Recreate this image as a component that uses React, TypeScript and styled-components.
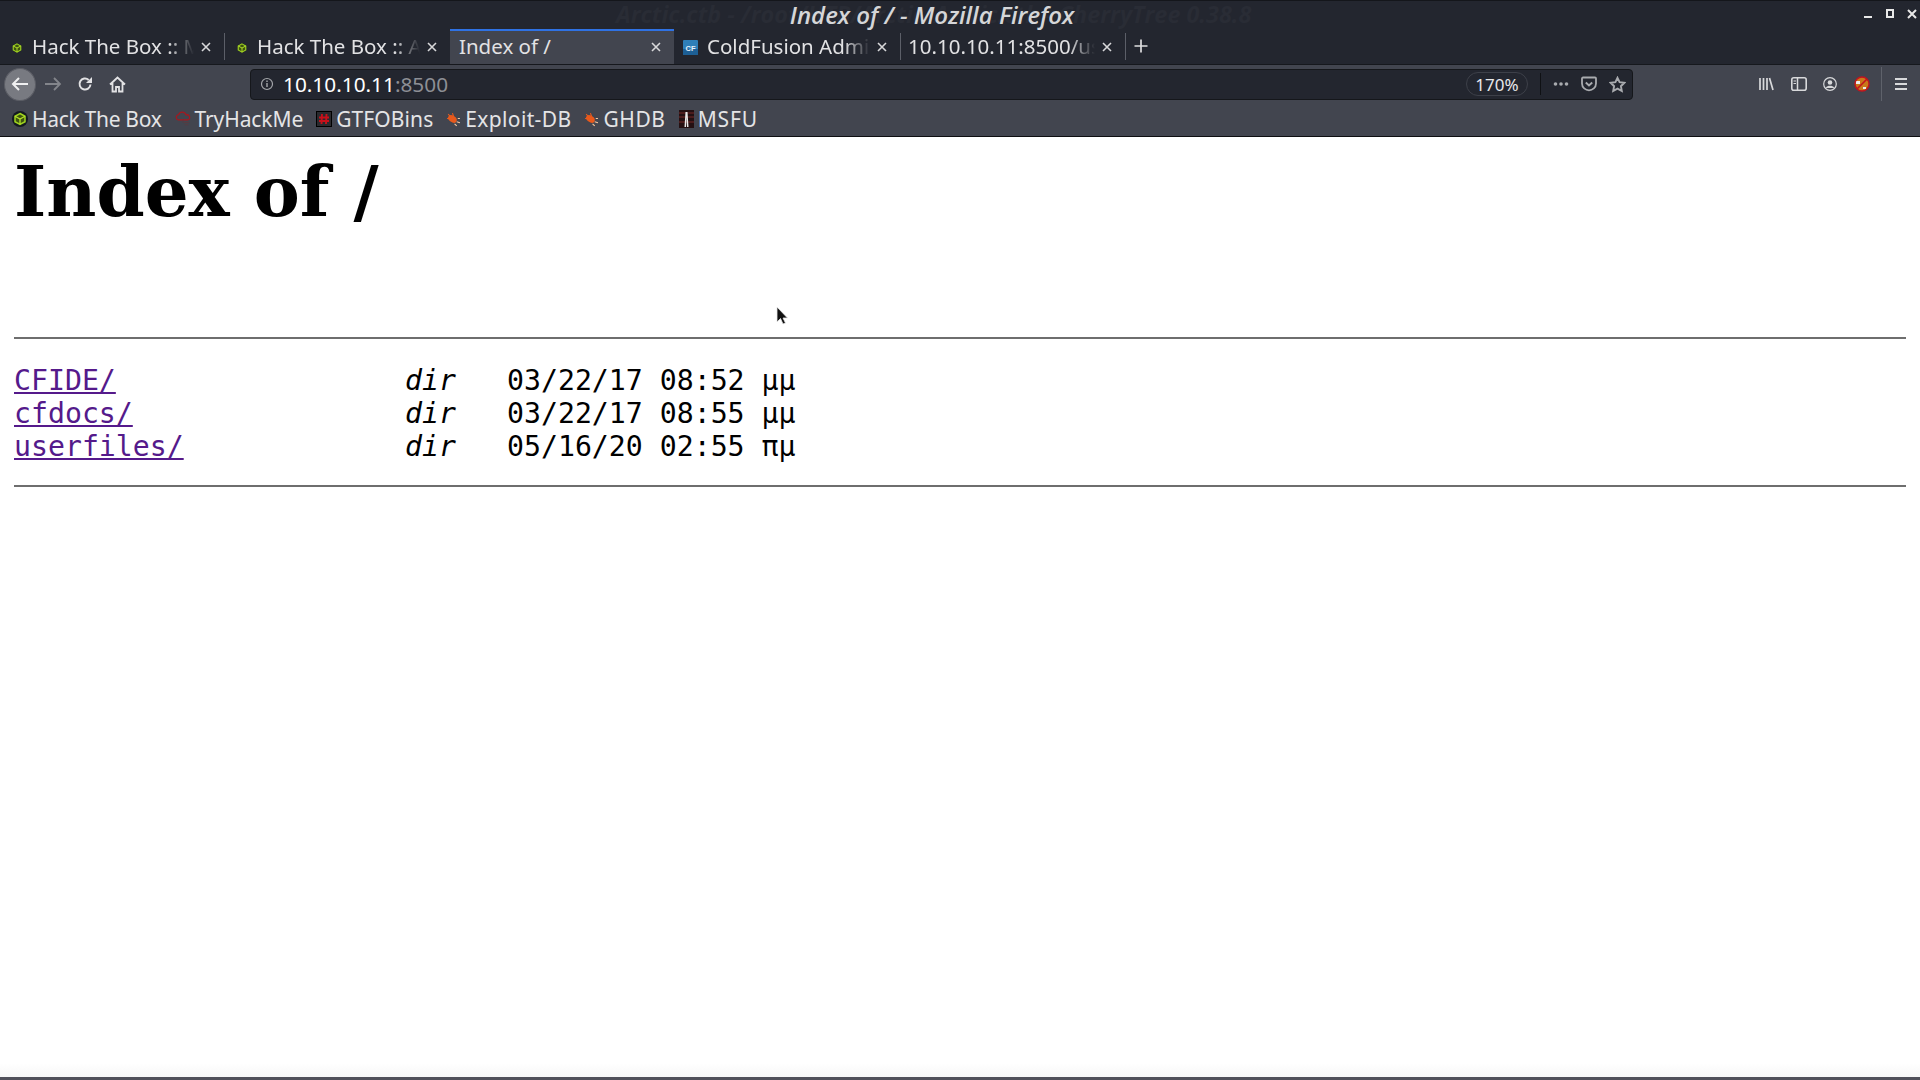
import React from "react";
import styled, { createGlobalStyle } from "styled-components";

const Global = createGlobalStyle`
  html, body { margin: 0; padding: 0; height: 100%; background: #fff; overflow: hidden; }
  #root { height: 100%; }
`;

const Shell = styled.div`
  width: 1920px; height: 1080px; display: flex; flex-direction: column;
  font-family: "Noto Sans", sans-serif; background: #fff; position: relative; overflow: hidden;
`;

const TitleBar = styled.div`
  height: 29px; flex: none; background: #23262f; border-top: 1px solid #14161b; box-sizing: border-box;
  display: flex; align-items: center; justify-content: center; position: relative;
`;
const GhostTitle = styled.span`
  position: absolute; left: 616px; top: -3px; font-size: 23.4px; font-weight: 700; font-style: italic;
  color: #292c35; white-space: nowrap; font-family: "Open Sans", "Noto Sans", sans-serif;
`;
const WindowTitle = styled.span`
  position: relative; left: -28px; top: -1px; font-size: 24px; font-weight: 600; font-style: italic; color: #d5d6d8;
  white-space: nowrap; font-family: "Open Sans", "Noto Sans", sans-serif;
`;
const WinControls = styled.div`
  position: absolute; right: 0; top: 6px; display: flex; gap: 8px; padding-right: 1px; color: #e8e8e8;
`;

const TabStrip = styled.div`
  height: 35px; flex: none; background: #23262f; display: flex; align-items: stretch;
  border-bottom: 1px solid #16181d;
`;
const Tab = styled.div<{ $active?: boolean; $w: number; $pad: number }>`
  width: ${p => p.$w}px; flex: none; box-sizing: border-box; display: flex; align-items: center;
  background: ${p => (p.$active ? "#42454f" : "transparent")};
  border-top: 2px solid ${p => (p.$active ? "#2f72e4" : "transparent")};
  padding-left: ${p => p.$pad}px;
`;
const TabDivider = styled.div`
  width: 1px; background: #5c5f68; margin: 4px 0; flex: none;
`;
const TabText = styled.span<{ $flush?: boolean; $nofade?: boolean }>`
  font-size: 20.5px; line-height: 28px; color: #e2e2e4; white-space: nowrap; overflow: hidden; flex: 1;
  min-width: 0; margin-left: ${p => (p.$flush ? 0 : 9)}px; padding-bottom: 4px;
  ${p =>
    p.$nofade
      ? ""
      : `-webkit-mask-image: linear-gradient(to right, #000 calc(100% - 26px), transparent);
         mask-image: linear-gradient(to right, #000 calc(100% - 26px), transparent);`}
`;
const TabClose = styled.span`
  width: 14px; height: 14px; flex: none; margin: 0 11px 2px 5px; color: #d8d8da; display: flex;
`;
const NewTab = styled.div`
  width: 30px; display: flex; align-items: center; justify-content: center; color: #dedee0; flex: none;
  padding-bottom: 2px;
`;

const NavBar = styled.div`
  height: 40px; flex: none; background: #42454f; display: flex; align-items: center; box-sizing: border-box;
  padding-bottom: 2px;
`;
const BackCircle = styled.div`
  width: 32px; height: 33px; border-radius: 50%; background: #787a81; margin-left: 4px; display: flex;
  align-items: center; justify-content: center; color: #f0f0f1; flex: none; box-sizing: border-box;
  border: 1px solid #5b5d65;
`;
const NavIcon = styled.div<{ $w: number; $dim?: boolean }>`
  width: ${p => p.$w}px; flex: none; display: flex; justify-content: center; align-items: center;
  color: ${p => (p.$dim ? "#83858b" : "#e2e2e4")};
`;
const UrlBar = styled.div`
  width: 1383px; height: 31px; flex: none; margin-left: 116px; background: #23262f; border: 1px solid #15171b;
  border-radius: 4px; box-sizing: border-box; display: flex; align-items: center; padding-left: 9px;
`;
const UrlText = styled.div`
  font-size: 20.8px; line-height: 28px; color: #fff; margin-left: 9px; white-space: nowrap; flex: 1;
`;
const UrlPort = styled.span`
  color: #8d8f95;
`;
const ZoomPill = styled.div`
  width: 62px; height: 24px; border: 1px solid #3d4049; border-radius: 12px; box-sizing: border-box;
  display: flex; align-items: center; justify-content: center; color: #e8e8ea; font-size: 17px; flex: none;
`;
const UrlSep = styled.div`
  width: 1px; height: 22px; background: #0f1114; margin: 0 12px; flex: none;
`;
const UrlActions = styled.div`
  display: flex; align-items: center; gap: 12px; color: #a9abaf; padding-right: 6px;
`;
const RightTools = styled.div`
  display: flex; align-items: center; margin-left: 126px; color: #d8d9db; gap: 16.5px;
`;
const ToolSep = styled.div`
  width: 1px; height: 34px; background: #5f626b; margin: 0 -4px 0 -5px;
`;

const Bookmarks = styled.div`
  flex: none; background: #42454f; display: flex; align-items: center; padding: 0 0 3px 12px; gap: 13px;
  border-bottom: 1px solid #0e0f12; height: 28px;
`;
const Bookmark = styled.div<{ $track: number }>`
  display: flex; align-items: center; gap: 4px; font-size: 21px; line-height: 28px; color: #e4e4e6; white-space: nowrap;
  letter-spacing: ${p => p.$track}px;
`;

const Content = styled.main`
  flex: 1; padding: 0 14px; min-height: 0; background: linear-gradient(to bottom, #fff calc(100% - 14px), #f7f7f7);
  border-bottom: 3px solid #50505a; overflow: hidden;
`;
const Heading = styled.h1`
  margin: 0; padding-top: 15px; height: 200px; box-sizing: border-box;
  font-family: "DejaVu Serif", serif; font-weight: 700; font-size: 69px; line-height: 80px; color: #000;
`;
const Rule = styled.hr`
  margin: 0; border: none; border-top: 2px solid #6e6e6e;
`;
const Listing = styled.div`
  padding: 25px 0 0; height: 146px; box-sizing: border-box;
`;
const Row = styled.div`
  display: grid; grid-template-columns: 391px 102px auto; height: 33px; line-height: 33px;
  font-family: "DejaVu Sans Mono", monospace; font-size: 28.2px; color: #000; white-space: pre;
`;
const DirLink = styled.a`
  color: #551a8b; text-decoration: underline;
`;
const Kind = styled.em`
  font-style: italic;
`;
const Cursor = styled.svg`
  position: absolute; left: 776px; top: 306px;
`;

const X = () => (
  <svg width="14" height="14" viewBox="0 0 14 14"><path d="M3 3l8 8M11 3l-8 8" stroke="currentColor" strokeWidth="1.6" /></svg>
);
const HtbIcon = ({ dark }: { dark?: boolean }) => (
  <svg width={dark ? 16 : 12} height={dark ? 16 : 12} viewBox="0 0 16 16">
    {dark && <circle cx="8" cy="8" r="8" fill="#141a20" />}
    <path d="M8 2.500l5 2.800v5.400l-5 2.800-5-2.800V5.300z" fill="#3e5410" stroke="#9fd31f" strokeWidth="1.500" />
    <path d="M3 5.300L8 8l5-2.700M8 8v5.500" fill="none" stroke="#b4e02a" strokeWidth="1.300" />
  </svg>
);
const THMIcon = () => (
  <svg width="16" height="18" viewBox="0 0 18 18">
    <path d="M3.500 10a3 3 0 0 1 .5-5.800 4.500 4.500 0 0 1 8.500 0.300A2.800 2.800 0 0 1 14.500 10H3.500z" fill="none" stroke="#a5181f" strokeWidth="1.400" />
    <path d="M9 10v3M10 13h6M11 15.500h4" stroke="#5a3a3f" strokeWidth="1" />
  </svg>
);
const GtfoIcon = () => (
  <svg width="16" height="16" viewBox="0 0 16 16">
    <rect x="0.500" y="0.500" width="15" height="15" fill="#2a2a2e" stroke="#000" />
    <path d="M6 3L5.500 13M10.500 3L10 13M3 6.500h10M3 10h10" stroke="#c8101a" strokeWidth="1.900" />
  </svg>
);
const BugIcon = () => (
  <svg width="15" height="15" viewBox="0 0 14 14">
    <ellipse cx="6" cy="6.500" rx="4.400" ry="3" transform="rotate(35 6 6.500)" fill="#e8591c" />
    <path d="M10 9l3 1M8 11l2 2M11 6h2" stroke="#f6c7a0" strokeWidth="1" />
    <path d="M2 2l2 2M6 1l1 3M1 6h2" stroke="#e8591c" strokeWidth="1" />
  </svg>
);
const MsfuIcon = () => (
  <svg width="15" height="18" viewBox="0 0 15 18">
    <rect width="15" height="18" fill="#241012" />
    <path d="M0 3h15M0 7h15M0 12h15" stroke="#5a2020" strokeWidth="1.500" />
    <path d="M6.500 2h2l1 15H8L7.500 7 7 17H5.500z" fill="#e8e8e8" />
  </svg>
);
const CfIcon = () => (
  <svg width="15" height="15" viewBox="0 0 15 15">
    <rect width="15" height="15" rx="1" fill="#2f7fb8" />
    <rect y="9" width="15" height="6" fill="#1d5f95" />
    <text x="2.500" y="10.500" fontSize="7.500" fontWeight="700" fill="#e8f2fa" fontFamily="Liberation Sans, sans-serif">CF</text>
  </svg>
);

const rows = [
  { name: "CFIDE/", date: "03/22/17 08:52 μμ" },
  { name: "cfdocs/", date: "03/22/17 08:55 μμ" },
  { name: "userfiles/", date: "05/16/20 02:55 πμ" },
];

export default function App() {
  return (
    <Shell>
      <Global />
      <TitleBar>
        <GhostTitle>Arctic.ctb - /root/HTB/Arctic/Arctic.ctb - CherryTree 0.38.8</GhostTitle>
        <WindowTitle>Index of / - Mozilla Firefox</WindowTitle>
        <WinControls>
          <svg width="14" height="14" viewBox="0 0 14 14"><rect x="3" y="9" width="8" height="2" fill="currentColor" /></svg>
          <svg width="14" height="14" viewBox="0 0 14 14"><rect x="4" y="3" width="6" height="7" fill="none" stroke="currentColor" strokeWidth="2" /></svg>
          <svg width="14" height="14" viewBox="0 0 14 14"><path d="M3 3l8 8M11 3l-8 8" stroke="currentColor" strokeWidth="2" /></svg>
        </WinControls>
      </TitleBar>
      <TabStrip>
        <Tab $w={224} $pad={11}>
          <HtbIcon />
          <TabText>Hack The Box :: Machines</TabText>
          <TabClose><X /></TabClose>
        </Tab>
        <TabDivider />
        <Tab $w={225} $pad={11}>
          <HtbIcon />
          <TabText>Hack The Box :: Active</TabText>
          <TabClose><X /></TabClose>
        </Tab>
        <Tab $active $w={224} $pad={9}>
          <TabText $flush $nofade>Index of /</TabText>
          <TabClose><X /></TabClose>
        </Tab>
        <Tab $w={226} $pad={9}>
          <CfIcon />
          <TabText>ColdFusion Administrator</TabText>
          <TabClose><X /></TabClose>
        </Tab>
        <TabDivider />
        <Tab $w={224} $pad={7}>
          <TabText $flush>10.10.10.11:8500/userfiles/</TabText>
          <TabClose><X /></TabClose>
        </Tab>
        <TabDivider />
        <NewTab>
          <svg width="16" height="16" viewBox="0 0 16 16"><path d="M8 1.500v13M1.500 8h13" stroke="currentColor" strokeWidth="1.700" /></svg>
        </NewTab>
      </TabStrip>
      <NavBar>
        <BackCircle>
          <svg width="20" height="18" viewBox="0 0 20 18"><path d="M18 9H3M9 3L3 9l6 6" fill="none" stroke="currentColor" strokeWidth="2" /></svg>
        </BackCircle>
        <NavIcon $w={34} $dim>
          <svg width="18" height="18" viewBox="0 0 18 18"><path d="M1 9h15M10 3l6 6-6 6" fill="none" stroke="currentColor" strokeWidth="1.800" /></svg>
        </NavIcon>
        <NavIcon $w={30}>
          <svg width="16" height="16" viewBox="0 0 16 16"><path d="M13.500 8.500a5.500 5.500 0 1 1-1.800-4.600" fill="none" stroke="currentColor" strokeWidth="2" /><path d="M15 1v6H9z" fill="currentColor" /></svg>
        </NavIcon>
        <NavIcon $w={34}>
          <svg width="17" height="17" viewBox="0 0 17 17"><path d="M1 8.500l7.500-7 7.500 7M3.500 7v8.500h3.500v-4.500h3v4.500h3.500V7" fill="none" stroke="currentColor" strokeWidth="1.800" /></svg>
        </NavIcon>
        <UrlBar>
          <svg width="14" height="14" viewBox="0 0 14 14"><circle cx="7" cy="7" r="5.500" fill="none" stroke="#a5a7ab" strokeWidth="1.200" /><path d="M7 6v4M7 3.500v1.500" stroke="#a5a7ab" strokeWidth="1.400" /></svg>
          <UrlText>10.10.10.11<UrlPort>:8500</UrlPort></UrlText>
          <ZoomPill>170%</ZoomPill>
          <UrlSep />
          <UrlActions>
            <svg width="16" height="14" viewBox="0 0 16 14"><circle cx="2.500" cy="7" r="1.800" fill="currentColor" /><circle cx="8" cy="7" r="1.800" fill="currentColor" /><circle cx="13.500" cy="7" r="1.800" fill="currentColor" /></svg>
            <svg width="16" height="16" viewBox="0 0 16 16"><path d="M2 1.500h12a1 1 0 0 1 1 1v5c0 4-3.500 6.800-7 6.800S1 11.500 1 7.500v-5a1 1 0 0 1 1-1z" fill="none" stroke="currentColor" strokeWidth="1.800" /><path d="M4.800 6.500L8 9.500l3.200-3" fill="none" stroke="currentColor" strokeWidth="1.900" /></svg>
            <svg width="17" height="17" viewBox="0 0 17 17"><path d="M8.500 1.800l2.100 4.400 4.800.6-3.500 3.400.9 4.800-4.300-2.400-4.300 2.400.9-4.800-3.500-3.400 4.800-.6z" fill="none" stroke="currentColor" strokeWidth="1.900" /></svg>
          </UrlActions>
        </UrlBar>
        <RightTools>
          <svg width="15" height="14" viewBox="0 0 15 14"><path d="M1 1v12M4.500 1v12M8 1v12M10.500 1l3.500 12" fill="none" stroke="currentColor" strokeWidth="1.700" /></svg>
          <svg width="16" height="14" viewBox="0 0 16 14"><rect x=".8" y=".8" width="14.400" height="12.400" rx="2" fill="none" stroke="currentColor" strokeWidth="1.600" /><path d="M6.500 1v12" stroke="currentColor" strokeWidth="1.500" /><path d="M2.500 4h2.500M2.500 6.500h2.500" stroke="currentColor" /></svg>
          <svg width="14" height="14" viewBox="0 0 14 14"><circle cx="7" cy="7" r="6.300" fill="none" stroke="currentColor" strokeWidth="1.200" /><circle cx="7" cy="5.500" r="2.300" fill="currentColor" /><path d="M3 10.500c1-2.300 7-2.300 8 0v.5H3z" fill="currentColor" /></svg>
          <svg width="16" height="16" viewBox="0 0 16 16"><circle cx="8" cy="8" r="7" fill="#c9781a" /><path d="M2 5h4v3H2zM9 11h3v2H9z" fill="#ececec" /><circle cx="8" cy="8" r="7" fill="none" stroke="#c3131d" strokeWidth="1.400" /><path d="M3 13L13 3" stroke="#c3131d" strokeWidth="1.600" /></svg>
          <ToolSep />
          <svg width="12" height="14" viewBox="0 0 12 14"><path d="M0 2h12M0 7h12M0 12h12" stroke="currentColor" strokeWidth="2" /></svg>
        </RightTools>
      </NavBar>
      <Bookmarks>
        <Bookmark $track={-0.3}><HtbIcon dark />Hack The Box</Bookmark>
        <Bookmark $track={-0.1}><THMIcon />TryHackMe</Bookmark>
        <Bookmark $track={0.1}><GtfoIcon />GTFOBins</Bookmark>
        <Bookmark $track={0.35}><BugIcon />Exploit-DB</Bookmark>
        <Bookmark $track={0.6}><BugIcon />GHDB</Bookmark>
        <Bookmark $track={0.9}><MsfuIcon />MSFU</Bookmark>
      </Bookmarks>
      <Content>
        <Heading>Index of /</Heading>
        <Rule />
        <Listing>
          {rows.map(r => (
            <Row key={r.name}>
              <span><DirLink href="#">{r.name}</DirLink></span>
              <Kind>dir</Kind>
              <span>{r.date}</span>
            </Row>
          ))}
        </Listing>
        <Rule />
      </Content>
      <Cursor width="12" height="20" viewBox="0 0 12 20">
        <path d="M1 1v15l3.500-3.500L7 18l2.500-1-2.500-5h4.500z" fill="#111" stroke="#e8e8e8" strokeWidth=".8" />
      </Cursor>
    </Shell>
  );
}
